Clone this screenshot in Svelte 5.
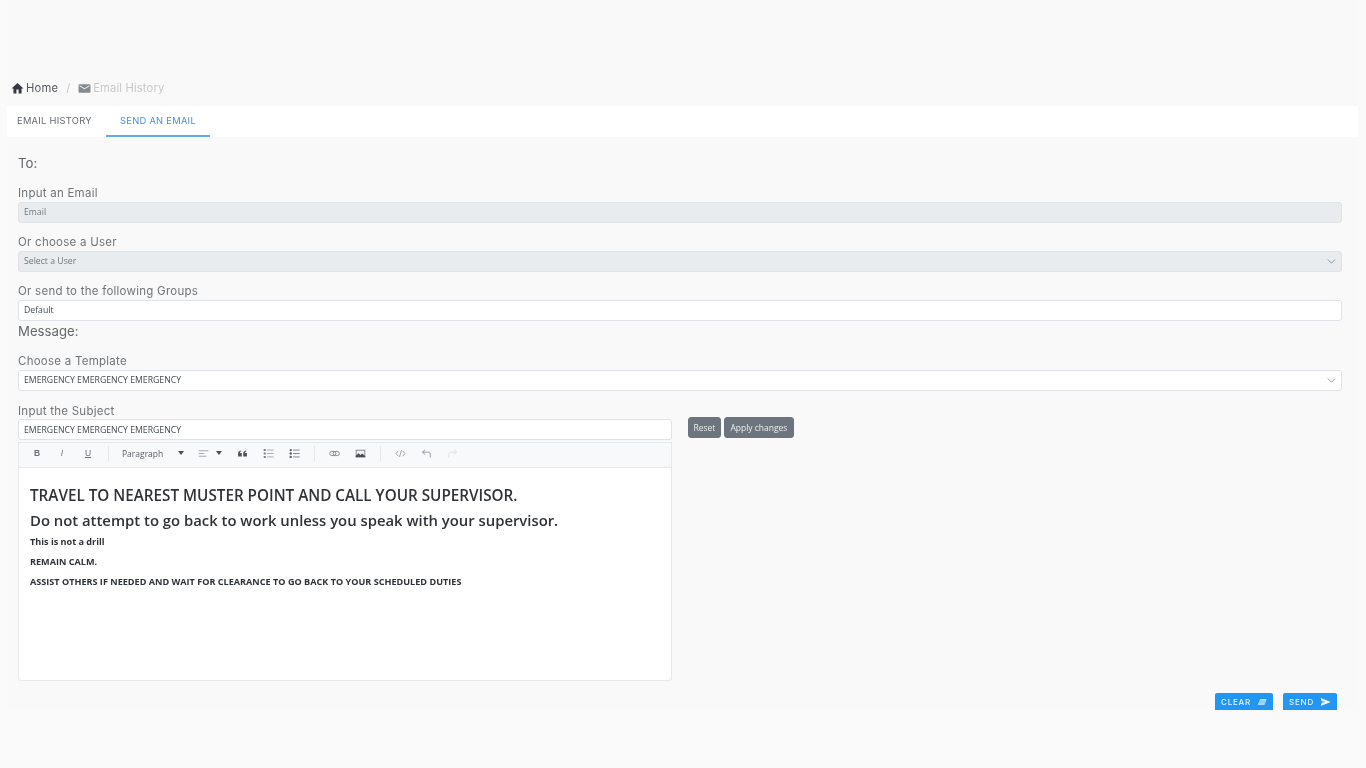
<script>
  let tab = $state('send');
  let subject = $state('EMERGENCY EMERGENCY EMERGENCY');
  let group = $state('Default');
  const template = 'EMERGENCY EMERGENCY EMERGENCY';
</script>

<div class="page">
  <main class="content">
    <nav class="crumbs">
      <svg class="crumb-icon" viewBox="0 0 24 24"><path d="M10 21v-7h4v7h5.500v-9H23L12 2 1 12h3.500v9z" fill="#343a40"/></svg>
      <span class="home">Home</span>
      <span class="slash">/</span>
      <svg class="crumb-icon mail" viewBox="0 0 24 24"><path d="M21 4H3c-1.100 0-2 .9-2 2v12c0 1.100.9 2 2 2h18c1.100 0 2-.9 2-2V6c0-1.100-.9-2-2-2zm0 4l-9 5.500L3 8V6l9 5.500L21 6v2z" fill="#858a8f"/></svg>
      <span class="current">Email History</span>
    </nav>

    <div class="tabs">
      <button class="tab first-tab" class:active={tab === 'history'} onclick={() => (tab = 'history')}>EMAIL HISTORY</button>
      <button class="tab" class:active={tab === 'send'} onclick={() => (tab = 'send')}>SEND AN EMAIL</button>
    </div>

    <form class="form" onsubmit={(e) => e.preventDefault()}>
      <h4 class="section to">To:</h4>

      <label class="label first" for="email">Input an Email</label>
      <input id="email" class="field" placeholder="Email" disabled />

      <label class="label user" for="user">Or choose a User</label>
      <div class="field select disabled" id="user">
        <span>Select a User</span>
        <svg class="chev" viewBox="0 0 16 16"><path d="M2 5l6 6 6-6" fill="none" stroke="#6c757d" stroke-width="1.600" stroke-linecap="round" stroke-linejoin="round"/></svg>
      </div>

      <label class="label groups" for="groups">Or send to the following Groups</label>
      <input id="groups" class="field group-input" bind:value={group} />

      <h4 class="section message">Message:</h4>

      <label class="label tpl" for="tpl">Choose a Template</label>
      <div class="field select" id="tpl">
        <span>{template}</span>
        <svg class="chev" viewBox="0 0 16 16"><path d="M2 5l6 6 6-6" fill="none" stroke="#6c757d" stroke-width="1.600" stroke-linecap="round" stroke-linejoin="round"/></svg>
      </div>

      <div class="compose">
        <div class="compose-left">
          <label class="label subject-label" for="subject">Input the Subject</label>
          <input id="subject" class="field subject" bind:value={subject} />

          <div class="editor">
            <div class="toolbar">
              <span class="tool b">B</span>
              <span class="tool i">I</span>
              <span class="tool u">U</span>
              <span class="sep s1"></span>
              <span class="para">Paragraph</span>
              <span class="caret c1"></span>
              <svg class="ti align" viewBox="0 0 16 16"><path d="M1 4h14M1 8h8M1 12h11" stroke="#a3a7ac" stroke-width="1.400" fill="none"/></svg>
              <span class="caret c2"></span>
              <svg class="ti quote" viewBox="0 0 16 16"><path d="M7 12.500H1.500V8C1.500 5.500 3 4 5.500 3.500L6 5C4.800 5.400 4.200 6.100 4.100 7.200H7zM14.500 12.500H9V8c0-2.500 1.500-4 4-4.500l.5 1.500c-1.200.4-1.800 1.100-1.900 2.200h2.900z" fill="#50565c"/></svg>
              <svg class="ti ol" viewBox="0 0 16 16"><path d="M6 3h9.500M6 8h9.500M6 13h9.500" stroke="#999ea3" stroke-width="1.200" fill="none"/><path d="M1 1.500h3v3H1zM1 6.500h3v3H1zM1 11.500h3v3H1z" fill="#7a7f85"/></svg>
              <svg class="ti ul" viewBox="0 0 16 16"><path d="M6 3h9.500M6 8h9.500M6 13h9.500" stroke="#80858b" stroke-width="1.400" fill="none"/><circle cx="2.500" cy="3" r="1.700" fill="#5c6268"/><circle cx="2.500" cy="8" r="1.700" fill="#5c6268"/><circle cx="2.500" cy="13" r="1.700" fill="#5c6268"/></svg>
              <span class="sep s2"></span>
              <svg class="ti link" viewBox="0 0 16 16"><rect x="1" y="5" width="9" height="6" rx="3" fill="none" stroke="#80858b" stroke-width="1.300"/><rect x="6" y="5" width="9" height="6" rx="3" fill="none" stroke="#80858b" stroke-width="1.300"/></svg>
              <svg class="ti image" viewBox="0 0 16 16"><rect x="1" y="2.500" width="14" height="11" fill="#8b9096"/><rect x="2.500" y="4" width="11" height="6.500" fill="#eef0f2"/><path d="M1 13.500v-2l4-4 3 2.500 2.500-2 4.500 4v1.500z" fill="#4a4f55"/></svg>
              <span class="sep s3"></span>
              <svg class="ti code" viewBox="0 0 16 16"><path d="M5 4L1.500 8 5 12M11 4l3.500 4-3.500 4M9.500 3l-3 10" stroke="#989da2" stroke-width="1.300" fill="none"/></svg>
              <svg class="ti undo" viewBox="0 0 16 16"><path d="M6 2.500L2 6l4 3.500M2 6h8c2.500 0 3.500 1.500 3.500 3.500V14" stroke="#8d9298" stroke-width="1.300" fill="none"/></svg>
              <svg class="ti redo" viewBox="0 0 16 16"><path d="M10 2.500L14 6l-4 3.500M14 6H6C3.500 6 2.500 7.500 2.500 9.500V14" stroke="#dcdfe2" stroke-width="1.300" fill="none"/></svg>
            </div>
            <div class="body">
              <h2>TRAVEL TO NEAREST MUSTER POINT AND CALL YOUR SUPERVISOR.</h2>
              <h3>Do not attempt to go back to work unless you speak with your supervisor.</h3>
              <p>This is not a drill</p>
              <p>REMAIN CALM.</p>
              <p>ASSIST OTHERS IF NEEDED AND WAIT FOR CLEARANCE TO GO BACK TO YOUR SCHEDULED DUTIES</p>
            </div>
          </div>
        </div>
        <div class="compose-actions">
          <button type="button" class="btn-grey reset">Reset</button>
          <button type="button" class="btn-grey">Apply changes</button>
        </div>
      </div>

      <div class="actions">
        <button type="button" class="btn-blue clear">
          CLEAR
          <svg viewBox="0 0 16 16"><path d="M5 3.500h10.500L12 12.500H1z" fill="#d8ecfd"/><path d="M1 6.500h13M1 9.500h12" stroke="#2196f3" stroke-width="1"/></svg>
        </button>
        <button type="button" class="btn-blue send">
          SEND
          <svg viewBox="0 0 16 16"><path d="M1 2l14.500 6L1 14l1.500-4.800L9 8l-6.500-1.200z" fill="#fff"/></svg>
        </button>
      </div>
    </form>
  </main>
</div>

<style>
  :global(body) {
    background: #fafafa;
    font-family: "Inter", "Liberation Sans", sans-serif;
  }

  .page {
    height: 768px;
    overflow: hidden;
    background: #fafafa;
    filter: blur(0.35px);
  }

  .content {
    margin-left: 7px;
    width: 1351px;
    height: 710px;
    overflow: hidden;
    padding-top: 80px;
    box-sizing: border-box;
    background: #f9f9f9;
  }

  .crumbs {
    display: flex;
    align-items: center;
    height: 16px;
    padding-left: 4px;
    font-size: 11.200px;
  }
  .crumb-icon { width: 13px; height: 13px; }
  .crumb-icon.mail { width: 13px; height: 13px; }
  .home { margin-left: 2px; color: #565b61; letter-spacing: 0.2px; }
  .slash { margin: 0 8px; color: #c4c7ca; }
  .current { margin-left: 2px; color: #c6c9cc; letter-spacing: 0.15px; }

  .tabs {
    display: flex;
    margin-top: 10px;
    height: 31px;
    background: #fff;
  }
  .tab {
    border: 0;
    background: none;
    width: 99px;
    padding: 0;
    font: 400 9.300px "Inter", sans-serif;
    letter-spacing: 0.3px;
    color: #666b70;
    border-bottom: 2px solid transparent;
  }
  .first-tab { text-align: left; padding-left: 10px; }
  .tab.active {
    width: 104px;
    color: #4a90d9;
    border-bottom: 2px solid #64a8ee;
  }

  .form {
    padding: 0 16px 0 11px;
    display: flex;
    flex-direction: column;
  }

  .section {
    margin: 0;
    font-size: 13.200px;
    font-weight: 400;
    line-height: 16px;
    color: #63686d;
  }
  .to { margin-top: 18px; }
  .message { margin-top: 2px; }

  .label {
    display: block;
    font-size: 11.500px;
    line-height: 14px;
    color: #70757a;
    letter-spacing: 0.25px;
    margin-bottom: 2px;
  }
  .first { margin-top: 15px; }
  .user { margin-top: 12px; }
  .groups { margin-top: 12.500px; }
  .tpl { margin-top: 15px; }
  .subject-label { margin-top: 13px; margin-bottom: 1px; }

  .field {
    box-sizing: border-box;
    display: block;
    width: 100%;
    height: 20.500px;
    padding: 0 5px;
    border: 1px solid #dfe2e6;
    border-radius: 3px;
    background: #fff;
    font: 8.700px "Open Sans", sans-serif;
    color: #444a50;
    outline: none;
  }
  .group-input { padding-bottom: 1px; }
  .field:disabled, .field.disabled {
    background: #e9ecef;
    color: #70767c;
  }
  .field::placeholder { color: #70767c; opacity: 1; }

  .select {
    display: flex;
    align-items: center;
    justify-content: space-between;
    height: 21px;
  }
  .chev { width: 9px; height: 9px; margin-right: 0; opacity: 0.8; }

  .compose { display: flex; align-items: flex-start; }
  .compose-left { width: 654px; flex: none; }
  .subject { height: 21px; padding-top: 1px; }

  .compose-actions {
    display: flex;
    gap: 3px;
    margin-left: 16px;
    margin-top: 26.500px;
  }
  .btn-grey {
    height: 21px;
    padding: 0 5.500px;
    border: 1px solid #6c757d;
    border-radius: 3px;
    background: #6c757d;
    color: #eceeef;
    font: 8.500px "Open Sans", sans-serif;
  }
  .reset { padding: 0 4.500px; }

  .editor {
    margin-top: 2px;
    border: 1px solid #e6e8eb;
    border-top: 0;
    border-radius: 0 0 3px 3px;
    background: #fff;
  }

  .toolbar {
    display: flex;
    align-items: center;
    height: 26px;
    padding: 0 0 3px 14px;
    background: #f8f9fa;
    border-top: 1px solid #e6e8eb;
    border-bottom: 1px solid #e6e8eb;
    box-sizing: border-box;
  }
  .tool {
    width: 8px;
    text-align: center;
    font: 8.500px "Liberation Sans", sans-serif;
    color: #6c7278;
  }
  .tool.b { font-weight: 700; }
  .tool.i { font-style: italic; margin-left: 17px; }
  .tool.u { text-decoration: underline; margin-left: 18px; }
  .sep { width: 1px; height: 15px; background: #e4e6e9; }
  .s1 { margin-left: 16px; margin-right: 13px; }
  .s2 { margin-left: 14px; margin-right: 14px; }
  .s3 { margin-left: 14px; margin-right: 14px; }
  .para { font: 8.500px "Open Sans", sans-serif; color: #5a5f65; width: 56px; }
  .caret {
    width: 0;
    height: 0;
    border-left: 3.500px solid transparent;
    border-right: 3.500px solid transparent;
    border-top: 4px solid #4a4f55;
  }
  .ti { width: 11px; height: 11px; flex: none; }
  .align { margin-left: 14px; }
  .c2 { margin-left: 7px; }
  .quote { margin-left: 15px; }
  .ol { margin-left: 15px; }
  .ul { margin-left: 15px; }
  .image { margin-left: 15px; }
  .undo { margin-left: 15px; }
  .redo { margin-left: 15px; }

  .body {
    height: 212px;
    padding: 17.500px 11px 0;
    box-sizing: border-box;
    font-family: "Open Sans", sans-serif;
    color: #2f3337;
  }
  .body h2 {
    margin: 0;
    font-size: 15.250px;
    line-height: 20px;
    font-weight: 600;
  }
  .body h3 {
    margin: 4.500px 0 0;
    font-size: 14.850px;
    line-height: 20px;
    font-weight: 600;
  }
  .body p {
    margin: 0;
    font-size: 9.100px;
    line-height: 12px;
    font-weight: 700;
    margin-top: 8px;
  }
  .body h3 + p { margin-top: 6px; }

  .actions {
    display: flex;
    justify-content: flex-end;
    gap: 10px;
    margin-top: 12px;
    padding-right: 5px;
  }
  .btn-blue {
    display: flex;
    align-items: center;
    justify-content: center;
    gap: 6px;
    height: 22px;
    padding: 0 6px 4px;
    border: 0;
    border-radius: 2px;
    background: #2196f3;
    color: #e6f3fe;
    font: 500 8px "Inter", sans-serif;
    letter-spacing: 0.8px;
  }
  .btn-blue svg { width: 12px; height: 12px; }
  .clear { width: 58px; }
  .send { width: 54px; }
</style>
